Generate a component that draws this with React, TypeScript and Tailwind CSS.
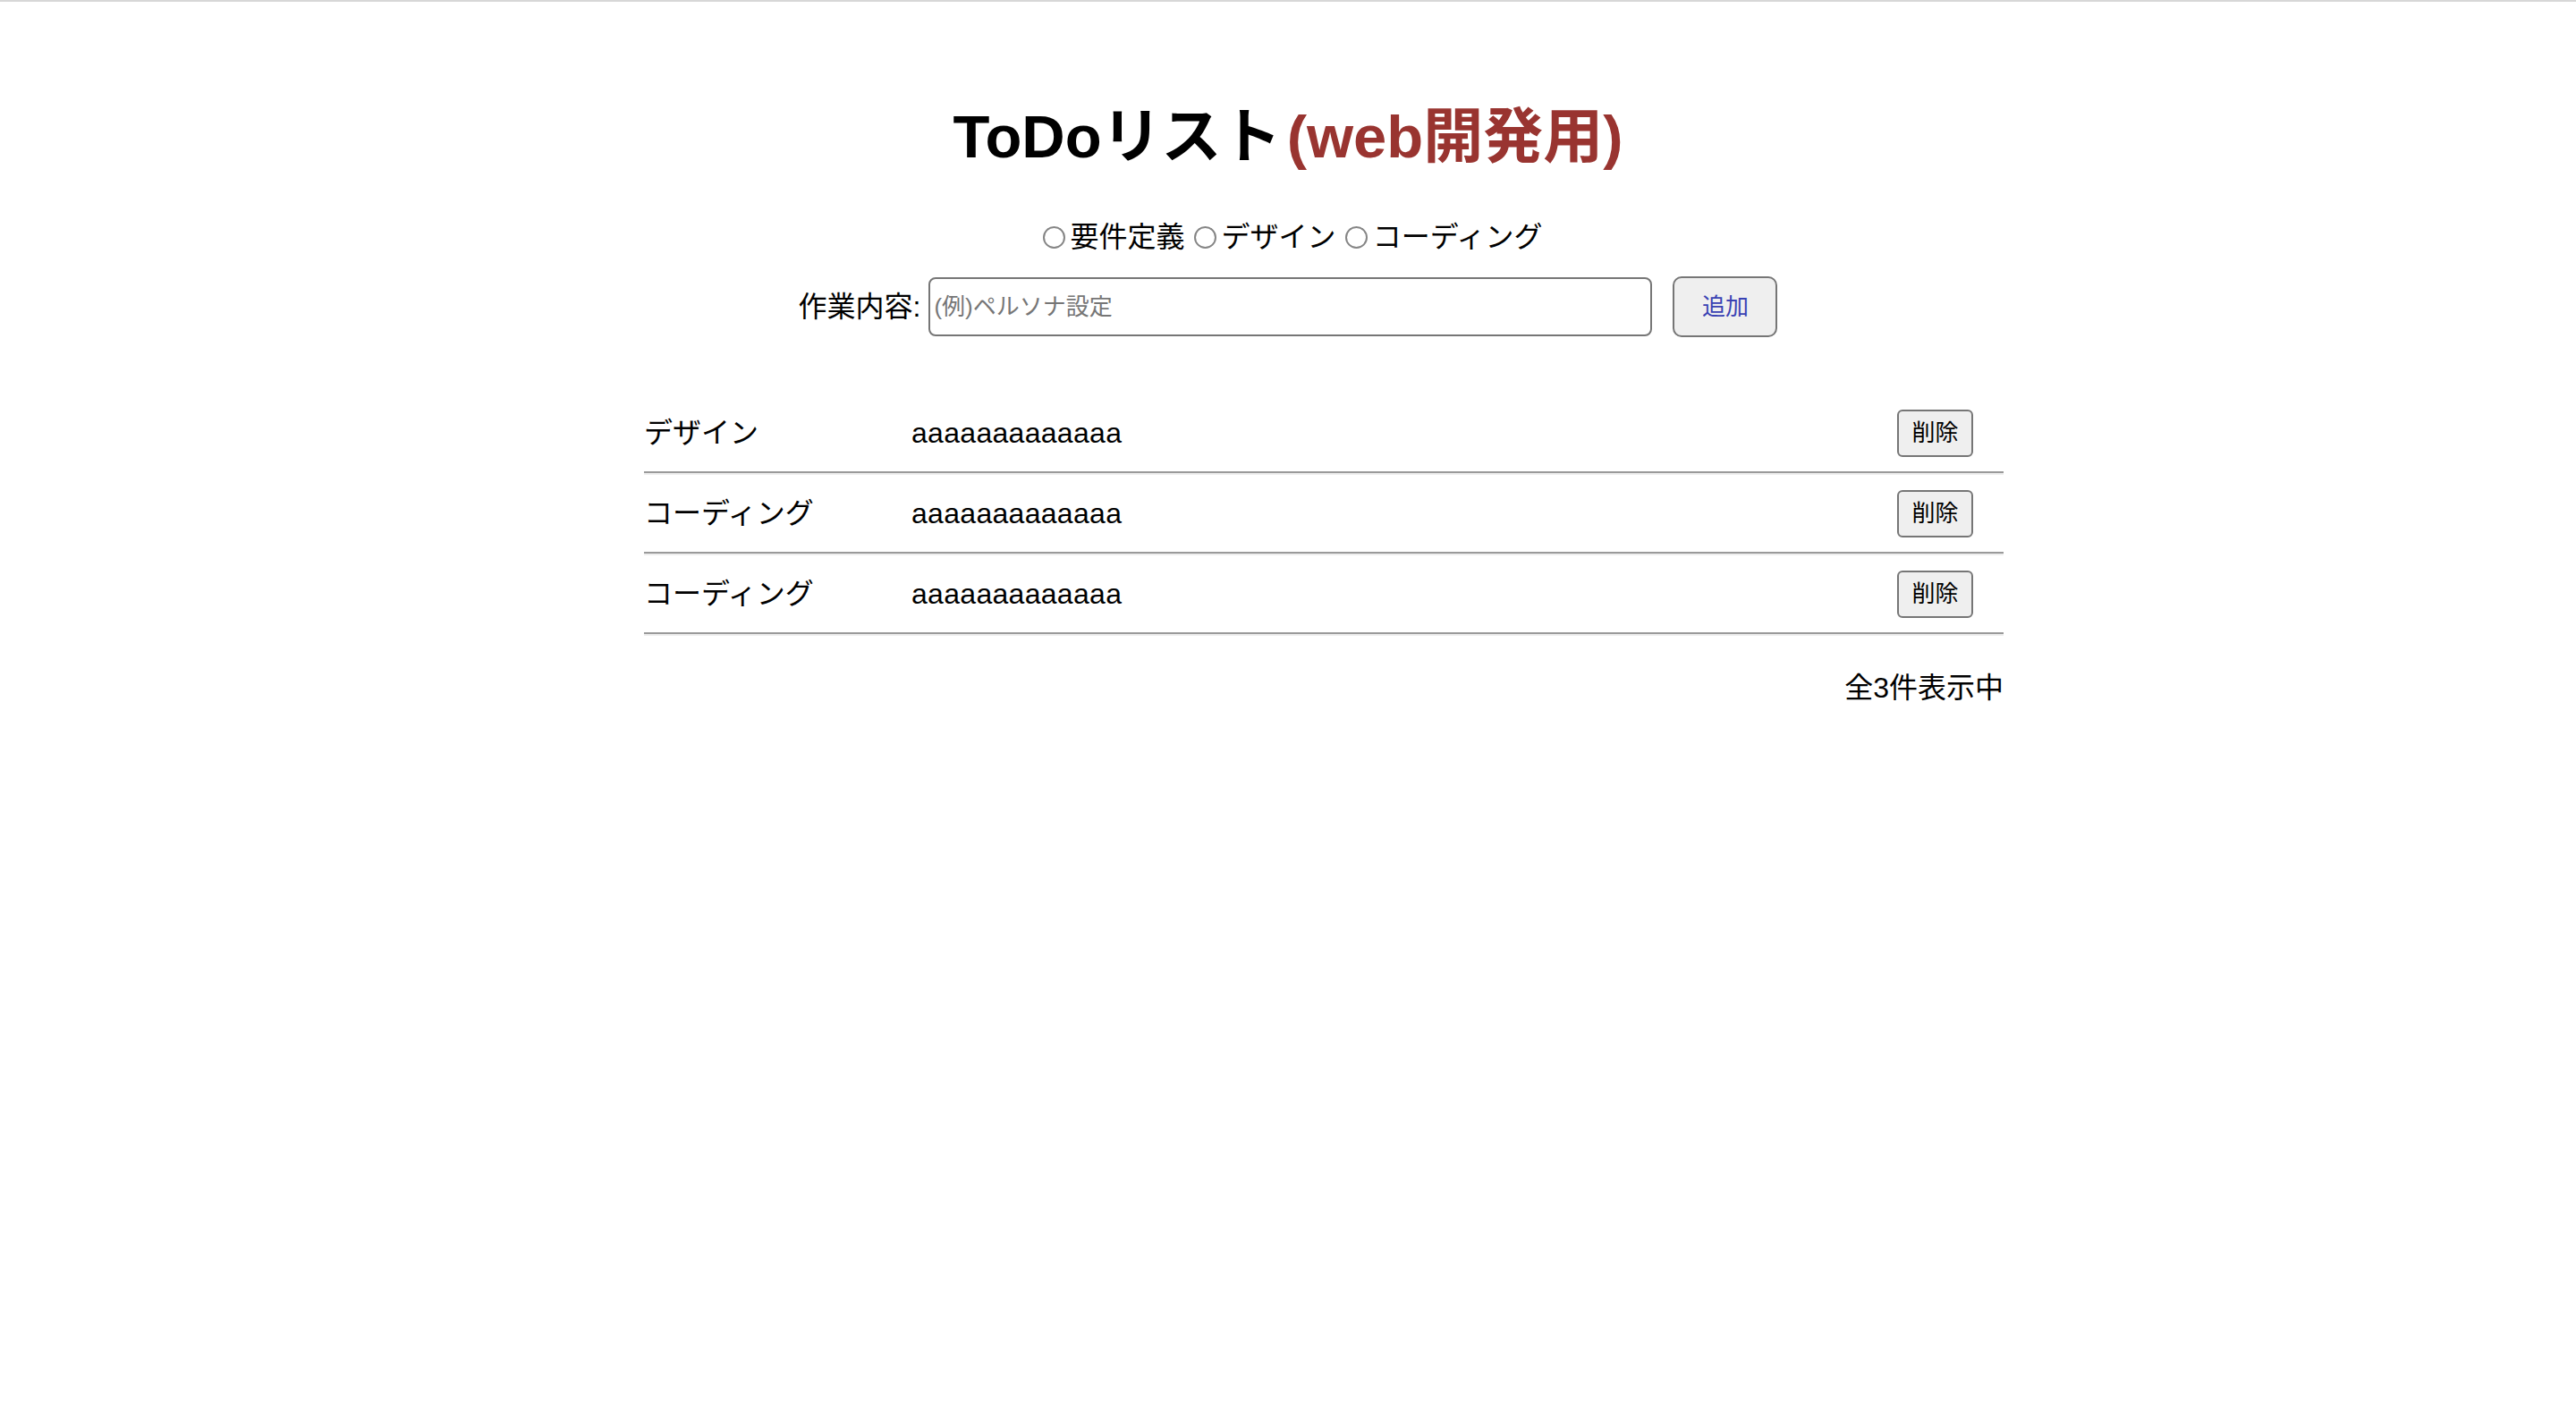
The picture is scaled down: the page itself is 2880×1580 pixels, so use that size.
import React from 'react';

const FONT = "font-['Liberation_Sans','Noto_Sans_CJK_JP',sans-serif]";

const categories = ['要件定義', 'デザイン', 'コーディング'];

const todos = [
  { id: 1, category: 'デザイン', text: 'aaaaaaaaaaaaa' },
  { id: 2, category: 'コーディング', text: 'aaaaaaaaaaaaa' },
  { id: 3, category: 'コーディング', text: 'aaaaaaaaaaaaa' },
];

function Radio({ label }: { label: string }) {
  return (
    <label className="flex items-center">
      <span className="ml-[10px] mr-[6px] w-[25px] h-[25px] rounded-full border-2 border-[#858585] bg-white" />
      <span>{label}</span>
    </label>
  );
}

function TodoRow({ category, text }: { category: string; text: string }) {
  return (
    <li>
      <div className="flex items-center h-[86px]">
        <span className="w-[299px]">{category}</span>
        <span className="flex-1 tracking-[0.3px]">{text}</span>
        <button className="mr-[34px] w-[85px] h-[53px] rounded-[6px] border-2 border-[#767676] bg-[#efefef] text-[26px] text-black">
          削除
        </button>
      </div>
      {/* inset hr look */}
      <div className="h-[2px] bg-[#9a9a9a]" />
      <div className="h-[2px] bg-[#eeeeee]" />
    </li>
  );
}

export default function App() {
  return (
    <div className={`min-h-screen w-full bg-white text-black text-[32px] ${FONT}`}>
      <div className="h-[2px] bg-[#d7d7d7]" />

      <h1 className="mt-[112px] text-center text-[67px] font-bold leading-[77px]">
        ToDoリスト<span className="ml-[6px] text-[#993430]">(web開発用)</span>
      </h1>

      {/* category radios */}
      <div className="mt-[54px] flex justify-center leading-[40px]">
        {categories.map((c) => (
          <Radio key={c} label={c} />
        ))}
      </div>

      {/* input row */}
      <div className="mt-[24px] flex justify-center items-center">
        <span className="mr-[9px]">作業内容:</span>
        <input
          className="w-[809px] h-[66px] rounded-[8px] border-2 border-[#767676] px-[4px] text-[26px] outline-none placeholder:text-[#767676]"
          placeholder="(例)ペルソナ設定"
        />
        <button className="ml-[23px] w-[117px] h-[68px] rounded-[10px] border-2 border-[#767676] bg-[#efefef] text-[26px] text-[#3a42b3]">
          追加
        </button>
      </div>

      {/* todo list */}
      <ul className="mx-auto mt-[64px] w-[1600px] pl-[80px] leading-[40px]">
        {todos.map((t) => (
          <TodoRow key={t.id} category={t.category} text={t.text} />
        ))}
      </ul>

      <div className="mx-auto mt-[38px] w-[1600px] pl-[80px] text-right leading-[40px]">
        全3件表示中
      </div>
    </div>
  );
}
